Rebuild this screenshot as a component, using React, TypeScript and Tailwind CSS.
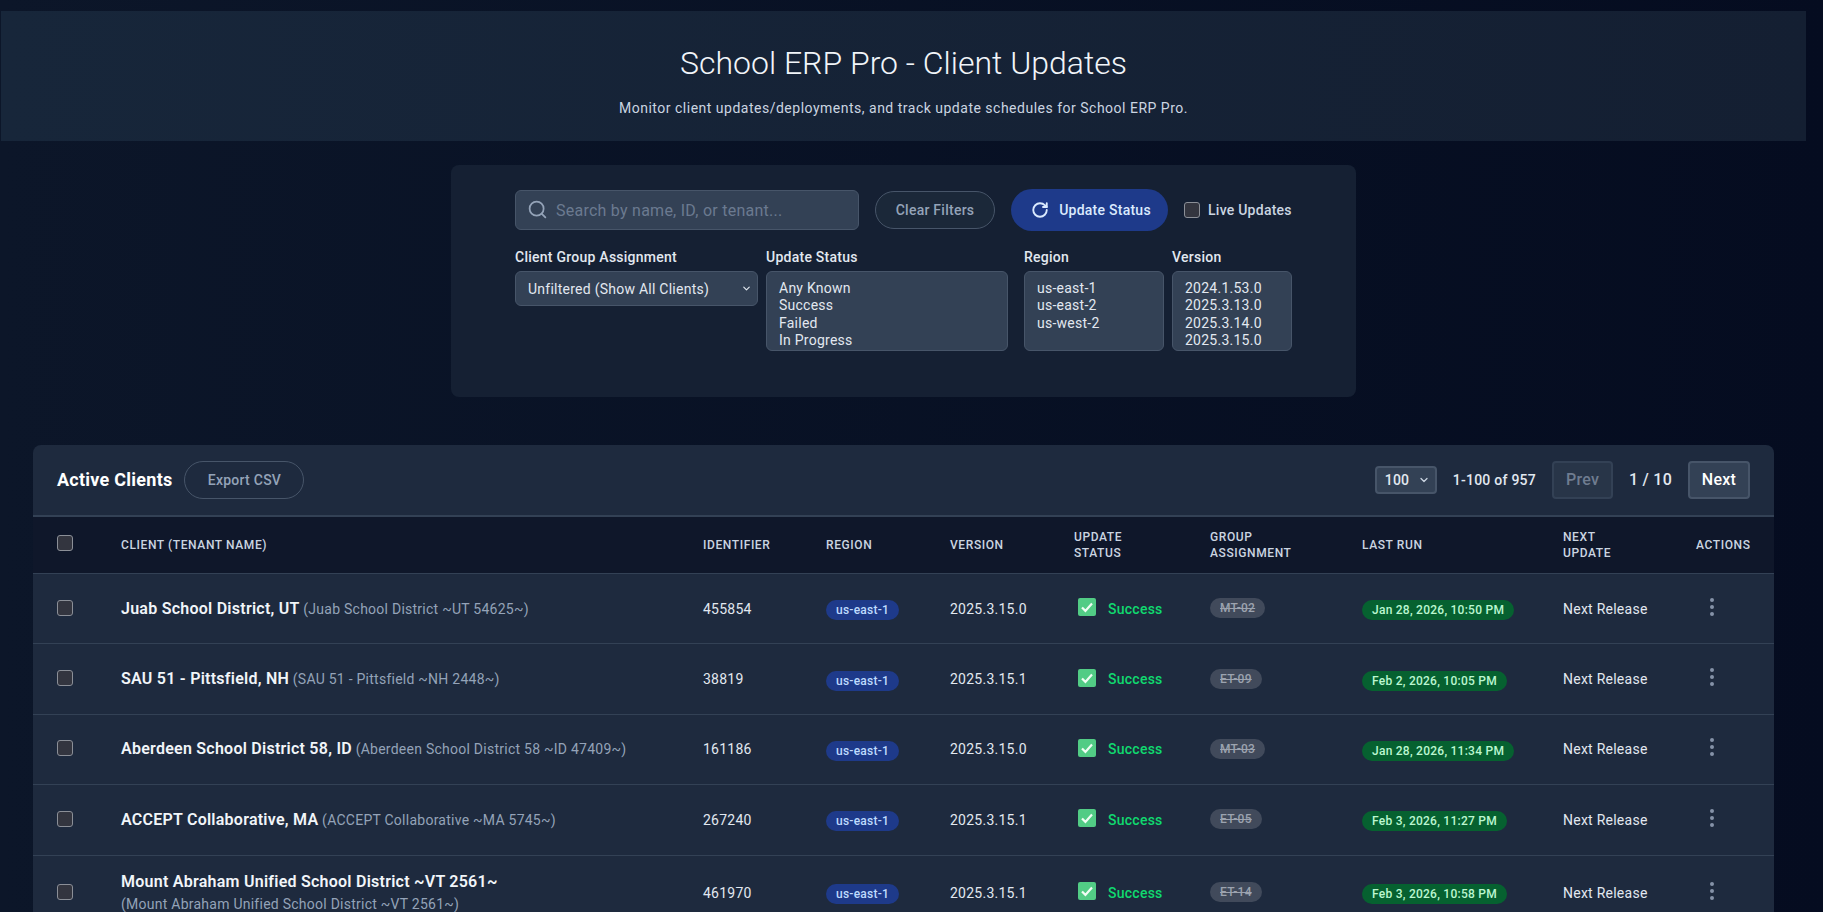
import { ChevronDown, MoreVertical, RotateCw, Search } from "lucide-react";

const font = "font-['Roboto',sans-serif]";
const boxCheck = "block h-4 w-4 appearance-none rounded-[3px] border border-[#8b8f97] bg-[#33353f]";

const clients = [
  { name: "Juab School District, UT", tenant: "(Juab School District ~UT 54625~)", id: "455854", version: "2025.3.15.0", group: "MT-02", run: "Jan 28, 2026, 10:50 PM" },
  { name: "SAU 51 - Pittsfield, NH", tenant: "(SAU 51 - Pittsfield ~NH 2448~)", id: "38819", version: "2025.3.15.1", group: "ET-09", run: "Feb 2, 2026, 10:05 PM" },
  { name: "Aberdeen School District 58, ID", tenant: "(Aberdeen School District 58 ~ID 47409~)", id: "161186", version: "2025.3.15.0", group: "MT-03", run: "Jan 28, 2026, 11:34 PM" },
  { name: "ACCEPT Collaborative, MA", tenant: "(ACCEPT Collaborative ~MA 5745~)", id: "267240", version: "2025.3.15.1", group: "ET-05", run: "Feb 3, 2026, 11:27 PM" },
  { name: "Mount Abraham Unified School District ~VT 2561~", tenant: "(Mount Abraham Unified School District ~VT 2561~)", id: "461970", version: "2025.3.15.1", group: "ET-14", run: "Feb 3, 2026, 10:58 PM", wrap: true },
];

const CheckIcon = () => (
  <svg width="18" height="18" viewBox="0 0 18 18" className="mb-[3px] shrink-0">
    <rect x="0" y="0" width="18" height="18" rx="2" fill="#52cc85" />
    <path d="M4 9.5l3.4 3.4L14 5.5" fill="none" stroke="#f0fdf4" strokeWidth="2.2" />
  </svg>
);

const ListBox = ({ options }: { options: string[] }) => (
  <select
    multiple
    size={4}
    className="h-20 w-full overflow-hidden rounded-md border border-[#475569] bg-[#334155] px-3 py-2 text-sm text-[#e2e8f0] [color-scheme:dark] [scrollbar-width:none]"
  >
    {options.map((o) => (
      <option key={o} className="pb-[1.3px]">
        {o}
      </option>
    ))}
  </select>
);

const Th = ({ children }: { children: React.ReactNode }) => (
  <th className="px-6 py-3 text-left text-xs font-medium uppercase leading-4 tracking-[0.6px] text-[#cbd5e1]">{children}</th>
);

const Label = ({ children }: { children: React.ReactNode }) => (
  <label className="mb-1 block text-sm font-medium leading-5 text-[#e2e8f0]">{children}</label>
);

export default function App() {
  return (
    <div className={`${font} h-[912px] overflow-hidden bg-gradient-to-r from-[#0c1629] to-[#050c20] tracking-[0.25px]`}>
      <div className="w-[1807px]">
        <header className="mx-px mt-[11px] h-[130px] bg-gradient-to-r from-[#17263a] to-[#141f32] pt-8 text-center">
          <h1 className="text-[32px] font-light leading-10 tracking-normal text-[#f1f5f9]">School ERP Pro - Client Updates</h1>
          <p className="mt-[15px] text-sm leading-5 tracking-[0.5px] text-[#cbd5e1]">
            Monitor client updates/deployments, and track update schedules for School ERP Pro.
          </p>
        </header>

        <section className="mx-auto mt-6 h-[232px] w-[905px] rounded-lg bg-[#152033] px-16 pt-6">
          <div className="flex h-[42px] items-center gap-4">
            <div className="relative w-[344px]">
              <Search className="absolute left-3 top-[9px] h-[21px] w-[21px] text-[#94a3b8]" />
              <input
                placeholder="Search by name, ID, or tenant..."
                className="h-10 w-full rounded-md border border-[#475569] bg-[#334155] pl-10 pr-3 text-base tracking-[0.25px] text-[#e2e8f0] outline-none placeholder:text-[#6b7a90]"
              />
            </div>
            <button className="h-[38px] w-[120px] rounded-full border border-[#475569] bg-[#1b2839] text-sm font-medium tracking-[0.25px] text-[#94a3b8]">Clear Filters</button>
            <button className="flex h-[42px] w-[157px] items-center justify-center gap-2.5 rounded-full bg-[#1e3a8a] pl-[3px] text-sm font-medium tracking-[0.25px] text-[#dbeafe]">
              <RotateCw className="h-[18px] w-[18px]" strokeWidth={2.5} />
              Update Status
            </button>
            <label className="flex items-center gap-2 text-sm font-medium text-[#cbd5e1]">
              <input type="checkbox" className={boxCheck} />
              Live Updates
            </label>
          </div>
          <div className="mt-4 flex gap-2">
            <div className="w-[243px]">
              <Label>Client Group Assignment</Label>
              <div className="relative">
                <select className="h-[35px] w-full appearance-none rounded-md border border-[#475569] bg-[#334155] px-3 text-sm tracking-[0.25px] text-[#e2e8f0]">
                  <option>Unfiltered (Show All Clients)</option>
                </select>
                <ChevronDown className="pointer-events-none absolute right-1.5 top-[12px] h-[11px] w-[11px] text-[#e2e8f0]" strokeWidth={2.5} />
              </div>
            </div>
            <div className="w-[242px]">
              <Label>Update Status</Label>
              <ListBox options={["Any Known", "Success", "Failed", "In Progress"]} />
            </div>
            <div className="ml-2 w-[140px]">
              <Label>Region</Label>
              <ListBox options={["us-east-1", "us-east-2", "us-west-2"]} />
            </div>
            <div className="w-[120px]">
              <Label>Version</Label>
              <ListBox options={["2024.1.53.0", "2025.3.13.0", "2025.3.14.0", "2025.3.15.0"]} />
            </div>
          </div>
        </section>

        <section className="mx-auto mt-12 w-[1741px] rounded-t-lg bg-[#1e2a3e]">
          <div className="box-content flex h-[70px] items-center justify-between border-b-2 border-b-[#334155] px-6">
            <div className="flex items-center gap-3">
              <h2 className="text-lg font-bold text-white">Active Clients</h2>
              <button className="h-[38px] w-[120px] rounded-full border border-[#475569] text-sm font-medium tracking-[0.25px] text-[#94a3b8]">Export CSV</button>
            </div>
            <div className="flex items-center gap-4">
              <div className="relative">
                <select defaultValue="100" className="h-7 w-[62px] appearance-none rounded border-2 border-[#475569] bg-[#334155] pl-2 text-sm font-medium tracking-[0.25px] text-[#e2e8f0]">
                  <option>100</option>
                </select>
                <ChevronDown className="pointer-events-none absolute right-[7px] top-[8px] h-3 w-3 text-[#cbd5e1]" strokeWidth={2.5} />
              </div>
              <span className="text-sm font-medium text-[#e2e8f0]">1-100 of 957</span>
              <button className="h-[38px] w-[61px] rounded border-2 border-[#334155] bg-[#283548] text-base font-medium tracking-[0.25px] text-[#6f7c90]">Prev</button>
              <span className="text-base font-medium text-[#e2e8f0]">1 / 10</span>
              <button className="h-[38px] w-[62px] rounded border-2 border-[#475569] bg-[#334155] text-base font-medium tracking-[0.25px] text-white">Next</button>
            </div>
          </div>
          <table className="w-full table-fixed border-collapse">
            <colgroup>
              <col className="w-[64px]" />
              <col className="w-[582px]" />
              <col className="w-[123px]" />
              <col className="w-[124px]" />
              <col className="w-[124px]" />
              <col className="w-[136px]" />
              <col className="w-[152px]" />
              <col className="w-[201px]" />
              <col className="w-[133px]" />
              <col className="w-[102px]" />
            </colgroup>
            <thead>
              <tr className="h-14 border-b border-b-[#334155] bg-[#0f172a]">
                <th className="px-6 text-left align-middle">
                  <input type="checkbox" className={`${boxCheck} mb-1`} />
                </th>
                <Th>Client (Tenant Name)</Th>
                <Th>Identifier</Th>
                <Th>Region</Th>
                <Th>Version</Th>
                <Th>Update Status</Th>
                <Th>Group Assignment</Th>
                <Th>Last Run</Th>
                <Th>
                  Next
                  <br />
                  Update
                </Th>
                <Th>Actions</Th>
              </tr>
            </thead>
            <tbody>
              {clients.map((c) => (
                <tr key={c.id} className={`${c.wrap ? "h-[75px]" : "h-[70.4px]"} border-b border-b-[#334155] text-sm text-[#e2e8f0]`}>
                  <td className="px-6">
                    <input type="checkbox" className={`${boxCheck} mb-0.5`} />
                  </td>
                  <td className="px-6 leading-[21px]">
                    <span className="text-base font-semibold text-[#f1f5f9]">{c.name}</span>{" "}
                    {c.wrap && <br />}
                    <span className="text-sm text-[#94a3b8]">{c.tenant}</span>
                  </td>
                  <td className="px-6">{c.id}</td>
                  <td className="px-6 pt-[2px]">
                    <span className="inline-block rounded-full bg-[#1e3a8a] px-2.5 py-0.5 text-xs font-medium leading-4 text-[#bfdbfe]">us-east-1</span>
                  </td>
                  <td className="px-6">{c.version}</td>
                  <td className="pl-7 pr-4">
                    <span className="flex items-center gap-3 font-medium text-[#10d96f]">
                      <CheckIcon />
                      Success
                    </span>
                  </td>
                  <td className="px-6 pb-[2px]">
                    <span className="inline-block rounded-full bg-[#414a5b] px-2.5 py-0.5 text-xs font-medium leading-4 text-[#9ca3af] line-through">{c.group}</span>
                  </td>
                  <td className="px-6 pt-[2px]">
                    <span className="inline-block rounded-full bg-[#066130] px-2.5 py-0.5 text-xs font-medium leading-4 text-[#bbf7d0]">{c.run}</span>
                  </td>
                  <td className="px-6">Next Release</td>
                  <td className="px-6">
                    <MoreVertical className="mb-1 ml-1 h-6 w-6 text-[#8592a8]" />
                  </td>
                </tr>
              ))}
            </tbody>
          </table>
        </section>
      </div>
    </div>
  );
}
